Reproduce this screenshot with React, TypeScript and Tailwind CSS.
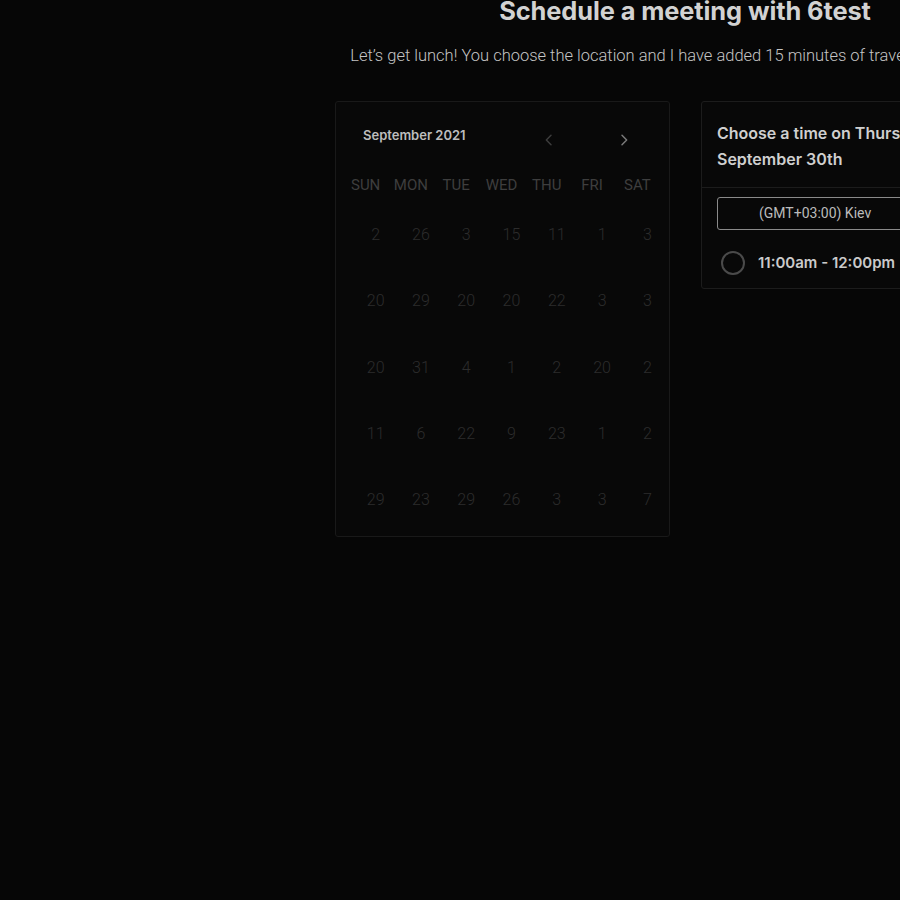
// Scheduling page: meeting title, month calendar and time slot picker

const dayNames = ["SUN", "MON", "TUE", "WED", "THU", "FRI", "SAT"];

const weeks = [
  ["2", "26", "3", "15", "11", "1", "3"],
  ["20", "29", "20", "20", "22", "3", "3"],
  ["20", "31", "4", "1", "2", "20", "2"],
  ["11", "6", "22", "9", "23", "1", "2"],
  ["29", "23", "29", "26", "3", "3", "7"],
];

function Chevron({ dir }: { dir: "left" | "right" }) {
  return (
    <svg width="16" height="16" viewBox="0 0 24 24" fill="none" strokeWidth="2.2" strokeLinecap="round" strokeLinejoin="round" className={dir === "left" ? "stroke-[#3d3d3d]" : "stroke-[#7a7a7a]"}>
      {dir === "left" ? <path d="M15 5l-7 7 7 7" /> : <path d="M9 5l7 7-7 7" />}
    </svg>
  );
}

export default function App() {
  return (
    <div className="w-[900px] h-[900px] overflow-hidden bg-[#060606]">
      <div className="ml-[335px] w-[700px] flex flex-col items-center">

        <h1 className="font-['Inter',sans-serif] font-bold text-[25.4px] leading-[22px] text-[#d2d2d2] whitespace-nowrap tracking-[-0.1px]">
          Schedule a meeting with 6test
        </h1>

        <p className="mt-[22px] font-['Roboto',sans-serif] font-light text-[16.5px] leading-6 text-[#c4c4c4] whitespace-nowrap">
          Let’s get lunch! You choose the location and I have added 15 minutes of travel time each way.
        </p>

        <div className="mt-[33px] w-full flex flex-row items-start gap-[31px]">

          {/* Calendar */}
          <div className="w-[335px] border border-[#191919] rounded-[3px] bg-[#080808] pb-[3px]">
            <div className="h-[68px] flex flex-row items-center">
              <span className="ml-[27px] font-['Inter',sans-serif] font-semibold text-[13px] text-[#bdbdbd]">September 2021</span>
              <div className="ml-[75px] mt-[8px] flex flex-row items-center gap-[59px]">
                <Chevron dir="left" />
                <Chevron dir="right" />
              </div>
            </div>

            <div className="ml-[7px] w-[317px] h-[30px] grid grid-cols-7 items-center">
              {dayNames.map((d) => (
                <span key={d} className="text-center font-['Roboto',sans-serif] text-[15px] text-[#3e3e3e]">{d}</span>
              ))}
            </div>

            <div className="pt-[2px]">
              {weeks.map((w, i) => (
                <div key={i} className="ml-[17px] w-[317px] h-[66.3px] grid grid-cols-7 items-center">
                  {w.map((n, j) => (
                    <span key={j} className="text-center font-['Roboto',sans-serif] font-light text-[16px] text-[#2c2c2c]">{n}</span>
                  ))}
                </div>
              ))}
            </div>
          </div>

          {/* Time picker */}
          <div className="w-[334px] border border-[#1c1c1c] rounded-[3px] bg-[#080808]">
            <div className="pt-[18px] pb-[15px] px-[15px] border-b border-[#1c1c1c]">
              <p className="font-['Inter',sans-serif] font-semibold text-[16px] leading-[26px] text-[#cfcfcf]">
                Choose a time on Thursday,<br />September 30th
              </p>
            </div>

            <div className="px-[15px] pt-[9px] pb-[8px]">
              <div className="h-[33px] border border-[#8a8a8a] rounded-[3px] flex items-center pl-[41px]">
                <span className="font-['Roboto',sans-serif] text-[14px] text-[#bbbbbb]">(GMT+03:00) Kiev</span>
              </div>

              <div className="mt-[16px] h-[34px] flex flex-row items-center gap-[13px] pl-[4px]">
                <div className="w-[24px] h-[24px] rounded-full border-2 border-[#4a4a4a]" />
                <span className="font-['Inter',sans-serif] font-semibold text-[15px] text-[#cacaca] whitespace-nowrap">11:00am - 12:00pm</span>
              </div>
            </div>
          </div>

        </div>
      </div>
    </div>
  );
}
